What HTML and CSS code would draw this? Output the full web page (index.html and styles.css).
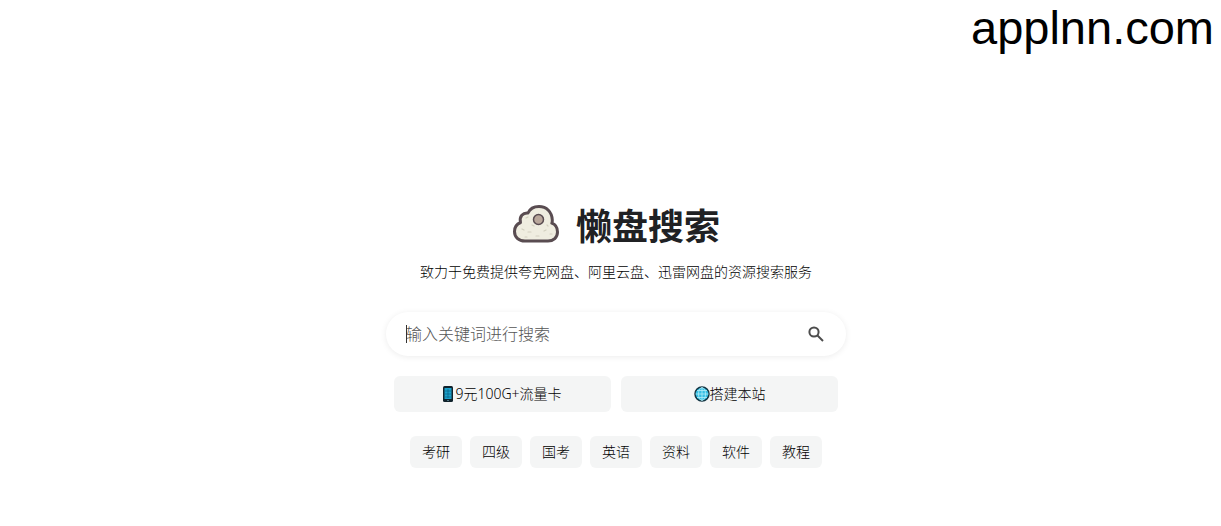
FILE: index.html
```html
<!DOCTYPE html>
<html lang="zh-CN">
<head>
    <meta charset="UTF-8">
    <meta name="viewport" content="width=device-width, initial-scale=1.0">
    <title>懒盘搜索</title>
    <link rel="stylesheet" href="styles.css">
</head>
<body>
    <header class="site-mark">applnn.com</header>

    <main class="home">
        <div class="brand">
            <svg class="logo" viewBox="0 0 48 40" aria-hidden="true">
                <path d="M13 37C6.500 37 2.500 33 2.500 27.500C2.500 23 5 20 8.500 18.500C7 12.500 11 8.500 16 9C18 4.500 22 2.500 27 2.500C34.500 2.500 40 8 40.300 16C40.400 17.500 40.200 18.500 39.800 19.200C43.500 20.500 45.500 24 45.500 28C45.500 33.500 41.500 37 36 37Z" fill="#efede0" stroke="#594c51" stroke-width="3" stroke-linejoin="round"/>
                <circle cx="26.500" cy="15.500" r="5" fill="#b9a79b" stroke="#594c51" stroke-width="1.500"/>
                <path d="M14 14l2-1M10 25l2 1M16 28h3M24 32h3M32 27l2-1M38 30h2M20 21l2 1M13 33h2M35 21l1 1" fill="none" stroke="#d3d0c0" stroke-width="1.200" stroke-linecap="round"/>
            </svg>
            <h1>懒盘搜索</h1>
        </div>
        <p class="slogan">致力于免费提供夸克网盘、阿里云盘、迅雷网盘的资源搜索服务</p>

        <form class="search">
            <input type="text" id="keyword" aria-label="关键词" placeholder="输入关键词进行搜索">
            <button type="submit" aria-label="搜索">
                <svg viewBox="0 0 16 16" aria-hidden="true">
                    <circle cx="6" cy="6" r="4.600"/>
                    <path d="M9.500 9.500L15 15"/>
                </svg>
            </button>
        </form>

        <nav class="promos">
            <a href="#card">
                <svg class="phone" viewBox="0 0 10 16" aria-hidden="true">
                    <rect width="10" height="16" rx="1.500" fill="#10222c"/>
                    <rect x="1.500" y="2" width="7" height="11" fill="#1ba2cc"/>
                    <path d="M2 5h6M2 8h6M2 11h6M5 3v9" stroke="#0c5878" stroke-width="0.600"/>
                    <path d="M4 14.500h2" stroke="#507482"/>
                </svg>9元100G+流量卡
            </a>
            <a href="#build">
                <svg class="globe" viewBox="0 0 16 16" aria-hidden="true">
                    <circle cx="8" cy="8" r="7" fill="#36bfe4" stroke="#123442" stroke-width="1.500"/>
                    <path d="M8 1.500v13M1.500 8h13M3 4.500h10M3 11.500h10" stroke="#b4edf8" stroke-width="0.800"/>
                    <ellipse cx="8" cy="8" rx="3.500" ry="6.500" fill="none" stroke="#b4edf8" stroke-width="0.800"/>
                </svg>搭建本站
            </a>
        </nav>

        <nav class="tags">
            <a href="#t1">考研</a>
            <a href="#t2">四级</a>
            <a href="#t3">国考</a>
            <a href="#t4">英语</a>
            <a href="#t5">资料</a>
            <a href="#t6">软件</a>
            <a href="#t7">教程</a>
        </nav>
    </main>
</body>
</html>
```
FILE: styles.css
```css
* {
    box-sizing: border-box;
}
body {
    margin: 0;
    background-color: #fff;
    color: #000;
    font-family: "Noto Sans", "Noto Sans CJK SC", sans-serif;
    font-size: 14px;
    font-weight: 300;
    line-height: 20px;
}
.site-mark {
    padding-right: 7px;
    font-family: "Liberation Sans", Arial, sans-serif;
    font-size: 47px;
    font-weight: 400;
    line-height: 55px;
    text-align: right;
}
.home {
    display: flex;
    flex-direction: column;
    align-items: center;
    padding: 149px 0 40px 11px;
}
.brand {
    display: flex;
    align-items: flex-start;
    gap: 16px;
}
.logo {
    width: 48px;
    height: 40px;
}
h1 {
    margin: 0;
    color: #202124;
    font-size: 36px;
    line-height: 46px;
    font-weight: 700;
}
.slogan {
    margin: 12px 0 30px;
}
.search {
    position: relative;
    display: flex;
    align-items: center;
    width: 100%;
    max-width: 460px;
    height: 44px;
    padding: 0 20px;
    border-radius: 22px;
    background-color: #fff;
    box-shadow: 0 1px 6px rgba(0, 0, 0, 0.08);
}
/* text caret at the start of the empty field */
.search::before {
    content: "";
    position: absolute;
    left: 20px;
    width: 1px;
    height: 18px;
    background-color: #333;
}
.search input {
    flex: 1;
    min-width: 0;
    padding: 0;
    border: 0;
    outline: 0;
    background: none;
    color: inherit;
    font-family: inherit;
    font-size: 16px;
    font-weight: inherit;
}
.search input::placeholder {
    color: #555;
}
.search button {
    display: flex;
    padding: 2px;
    border: 0;
    background: none;
    cursor: pointer;
}
.search svg {
    width: 16px;
    height: 16px;
    fill: none;
    stroke: #4d4d4d;
    stroke-width: 2;
}
.promos {
    display: flex;
    gap: 10px;
    width: 100%;
    max-width: 444px;
    margin: 20px 0 24px;
}
.promos a {
    display: flex;
    flex: 1;
    align-items: center;
    justify-content: center;
    height: 36px;
}
.promos a, .tags a {
    border-radius: 6px;
    background-color: #f4f5f5;
    color: inherit;
    text-decoration: none;
}
.phone {
    width: 10px;
    height: 16px;
    margin-right: 2px;
}
.globe {
    width: 16px;
    height: 16px;
}
.tags {
    display: flex;
    flex-wrap: wrap;
    justify-content: center;
    gap: 8px;
}
.tags a {
    padding: 6px 12px;
}
```
